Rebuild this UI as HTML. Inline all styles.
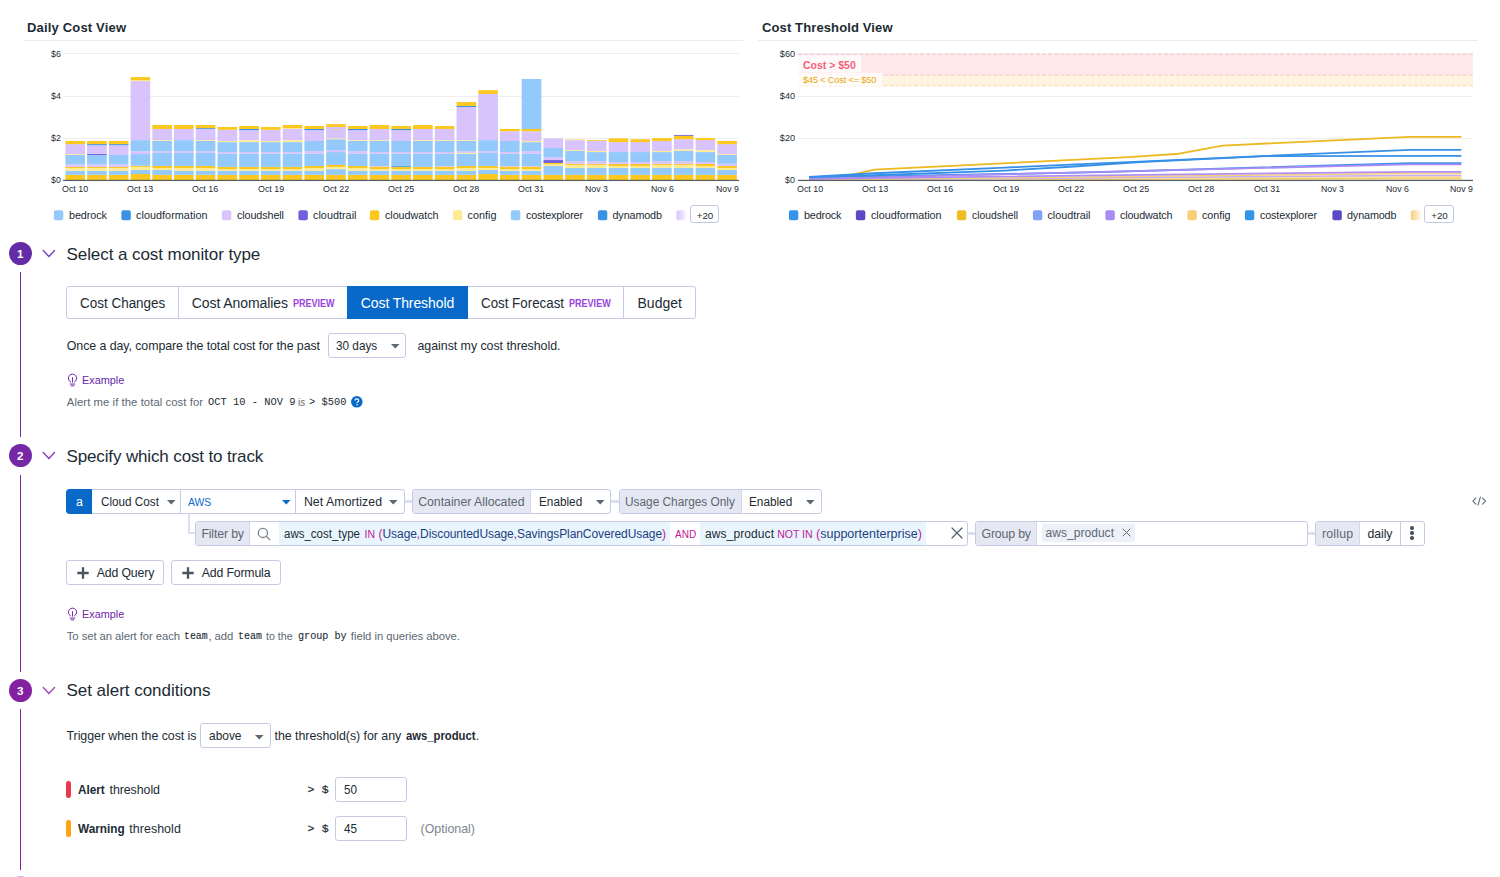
<!DOCTYPE html>
<html lang="en"><head><meta charset="utf-8"><title>Cost Monitor</title>
<style>
html,body{margin:0;padding:0;background:#fff;overflow:hidden}
body{width:1500px;height:877px;position:relative;overflow:hidden;font-family:"Liberation Sans",sans-serif;color:#1c2b34}
.t{position:absolute;white-space:pre;line-height:20px;height:20px;transform-origin:0 50%}
svg{display:block;overflow:visible}
</style></head><body>
<svg style="position:absolute;left:0;top:0" width="1500" height="232" viewBox="0 0 1500 232" shape-rendering="auto">
<rect x="63" y="53.0" width="676" height="1" fill="#eeeef1"/>
<rect x="798" y="53.0" width="675" height="1" fill="#eeeef1"/>
<rect x="63" y="96.0" width="676" height="1" fill="#eeeef1"/>
<rect x="798" y="96.0" width="675" height="1" fill="#eeeef1"/>
<rect x="63" y="138.0" width="676" height="1" fill="#eeeef1"/>
<rect x="798" y="138.0" width="675" height="1" fill="#eeeef1"/>
<rect x="65.40" y="174.88" width="19.6" height="5.56" fill="#fdc81e"/>
<rect x="65.40" y="170.89" width="19.6" height="3.99" fill="#93c9fb"/>
<rect x="65.40" y="168.04" width="19.6" height="2.85" fill="#fdeb96"/>
<rect x="65.40" y="166.90" width="19.6" height="1.14" fill="#fdc81e"/>
<rect x="65.40" y="164.33" width="19.6" height="2.57" fill="#d8c3fc"/>
<rect x="65.40" y="154.93" width="19.6" height="9.41" fill="#93c9fb"/>
<rect x="65.40" y="154.07" width="19.6" height="0.86" fill="#fdeb96"/>
<rect x="65.40" y="144.09" width="19.6" height="9.98" fill="#d8c3fc"/>
<rect x="65.40" y="140.96" width="19.6" height="3.14" fill="#fdc81e"/>
<rect x="87.13" y="174.88" width="19.6" height="5.56" fill="#fdc81e"/>
<rect x="87.13" y="170.89" width="19.6" height="3.99" fill="#93c9fb"/>
<rect x="87.13" y="168.04" width="19.6" height="2.85" fill="#fdeb96"/>
<rect x="87.13" y="166.90" width="19.6" height="1.14" fill="#fdc81e"/>
<rect x="87.13" y="164.33" width="19.6" height="2.57" fill="#d8c3fc"/>
<rect x="87.13" y="154.93" width="19.6" height="9.41" fill="#93c9fb"/>
<rect x="87.13" y="153.93" width="19.6" height="1.00" fill="#6f5fdc"/>
<rect x="87.13" y="145.23" width="19.6" height="8.69" fill="#d8c3fc"/>
<rect x="87.13" y="144.09" width="19.6" height="1.14" fill="#3a92e6"/>
<rect x="87.13" y="140.96" width="19.6" height="3.14" fill="#fdc81e"/>
<rect x="108.86" y="174.88" width="19.6" height="5.56" fill="#fdc81e"/>
<rect x="108.86" y="170.89" width="19.6" height="3.99" fill="#93c9fb"/>
<rect x="108.86" y="168.04" width="19.6" height="2.85" fill="#fdeb96"/>
<rect x="108.86" y="166.90" width="19.6" height="1.14" fill="#fdc81e"/>
<rect x="108.86" y="164.33" width="19.6" height="2.57" fill="#d8c3fc"/>
<rect x="108.86" y="154.93" width="19.6" height="9.41" fill="#93c9fb"/>
<rect x="108.86" y="145.23" width="19.6" height="9.69" fill="#d8c3fc"/>
<rect x="108.86" y="144.09" width="19.6" height="1.14" fill="#3a92e6"/>
<rect x="108.86" y="140.96" width="19.6" height="3.14" fill="#fdc81e"/>
<rect x="130.59" y="174.03" width="19.6" height="6.41" fill="#fdc81e"/>
<rect x="130.59" y="170.03" width="19.6" height="3.99" fill="#93c9fb"/>
<rect x="130.59" y="166.90" width="19.6" height="3.14" fill="#fdeb96"/>
<rect x="130.59" y="165.76" width="19.6" height="1.14" fill="#fdc81e"/>
<rect x="130.59" y="154.07" width="19.6" height="11.69" fill="#93c9fb"/>
<rect x="130.59" y="151.22" width="19.6" height="2.85" fill="#d8c3fc"/>
<rect x="130.59" y="140.10" width="19.6" height="11.12" fill="#93c9fb"/>
<rect x="130.59" y="81.09" width="19.6" height="59.01" fill="#d8c3fc"/>
<rect x="130.59" y="80.24" width="19.6" height="0.86" fill="#fdeb96"/>
<rect x="130.59" y="77.10" width="19.6" height="3.14" fill="#fdc81e"/>
<rect x="152.32" y="174.88" width="19.6" height="5.56" fill="#fdc81e"/>
<rect x="152.32" y="170.03" width="19.6" height="4.85" fill="#93c9fb"/>
<rect x="152.32" y="168.04" width="19.6" height="2.00" fill="#fdeb96"/>
<rect x="152.32" y="166.04" width="19.6" height="2.00" fill="#fdc81e"/>
<rect x="152.32" y="152.93" width="19.6" height="13.11" fill="#93c9fb"/>
<rect x="152.32" y="151.22" width="19.6" height="1.71" fill="#d8c3fc"/>
<rect x="152.32" y="140.96" width="19.6" height="10.26" fill="#93c9fb"/>
<rect x="152.32" y="140.10" width="19.6" height="0.86" fill="#fdeb96"/>
<rect x="152.32" y="128.99" width="19.6" height="11.12" fill="#d8c3fc"/>
<rect x="152.32" y="124.99" width="19.6" height="3.99" fill="#fdc81e"/>
<rect x="174.05" y="174.88" width="19.6" height="5.56" fill="#fdc81e"/>
<rect x="174.05" y="170.89" width="19.6" height="3.99" fill="#93c9fb"/>
<rect x="174.05" y="168.04" width="19.6" height="2.85" fill="#fdeb96"/>
<rect x="174.05" y="166.04" width="19.6" height="2.00" fill="#fdc81e"/>
<rect x="174.05" y="152.93" width="19.6" height="13.11" fill="#93c9fb"/>
<rect x="174.05" y="151.22" width="19.6" height="1.71" fill="#d8c3fc"/>
<rect x="174.05" y="140.10" width="19.6" height="11.12" fill="#93c9fb"/>
<rect x="174.05" y="128.99" width="19.6" height="11.12" fill="#d8c3fc"/>
<rect x="174.05" y="124.99" width="19.6" height="3.99" fill="#fdc81e"/>
<rect x="195.78" y="174.88" width="19.6" height="5.56" fill="#fdc81e"/>
<rect x="195.78" y="170.89" width="19.6" height="3.99" fill="#93c9fb"/>
<rect x="195.78" y="168.04" width="19.6" height="2.85" fill="#fdeb96"/>
<rect x="195.78" y="166.04" width="19.6" height="2.00" fill="#fdc81e"/>
<rect x="195.78" y="152.93" width="19.6" height="13.11" fill="#93c9fb"/>
<rect x="195.78" y="151.22" width="19.6" height="1.71" fill="#d8c3fc"/>
<rect x="195.78" y="140.96" width="19.6" height="10.26" fill="#93c9fb"/>
<rect x="195.78" y="140.10" width="19.6" height="0.86" fill="#fdeb96"/>
<rect x="195.78" y="128.99" width="19.6" height="11.12" fill="#d8c3fc"/>
<rect x="195.78" y="128.13" width="19.6" height="0.86" fill="#3a92e6"/>
<rect x="195.78" y="124.99" width="19.6" height="3.14" fill="#fdc81e"/>
<rect x="217.51" y="174.88" width="19.6" height="5.56" fill="#fdc81e"/>
<rect x="217.51" y="170.89" width="19.6" height="3.99" fill="#93c9fb"/>
<rect x="217.51" y="169.18" width="19.6" height="1.71" fill="#fdeb96"/>
<rect x="217.51" y="166.90" width="19.6" height="2.28" fill="#fdc81e"/>
<rect x="217.51" y="153.79" width="19.6" height="13.11" fill="#93c9fb"/>
<rect x="217.51" y="152.08" width="19.6" height="1.71" fill="#d8c3fc"/>
<rect x="217.51" y="142.10" width="19.6" height="9.98" fill="#93c9fb"/>
<rect x="217.51" y="140.96" width="19.6" height="1.14" fill="#fdeb96"/>
<rect x="217.51" y="129.84" width="19.6" height="11.12" fill="#d8c3fc"/>
<rect x="217.51" y="126.99" width="19.6" height="2.85" fill="#fdc81e"/>
<rect x="239.24" y="174.88" width="19.6" height="5.56" fill="#fdc81e"/>
<rect x="239.24" y="170.89" width="19.6" height="3.99" fill="#93c9fb"/>
<rect x="239.24" y="169.18" width="19.6" height="1.71" fill="#fdeb96"/>
<rect x="239.24" y="166.90" width="19.6" height="2.28" fill="#fdc81e"/>
<rect x="239.24" y="153.79" width="19.6" height="13.11" fill="#93c9fb"/>
<rect x="239.24" y="152.08" width="19.6" height="1.71" fill="#d8c3fc"/>
<rect x="239.24" y="142.10" width="19.6" height="9.98" fill="#93c9fb"/>
<rect x="239.24" y="140.10" width="19.6" height="2.00" fill="#fdeb96"/>
<rect x="239.24" y="130.13" width="19.6" height="9.98" fill="#d8c3fc"/>
<rect x="239.24" y="128.99" width="19.6" height="1.14" fill="#3a92e6"/>
<rect x="239.24" y="125.99" width="19.6" height="2.99" fill="#fdc81e"/>
<rect x="260.97" y="174.88" width="19.6" height="5.56" fill="#fdc81e"/>
<rect x="260.97" y="170.89" width="19.6" height="3.99" fill="#93c9fb"/>
<rect x="260.97" y="169.18" width="19.6" height="1.71" fill="#fdeb96"/>
<rect x="260.97" y="166.90" width="19.6" height="2.28" fill="#fdc81e"/>
<rect x="260.97" y="153.79" width="19.6" height="13.11" fill="#93c9fb"/>
<rect x="260.97" y="152.08" width="19.6" height="1.71" fill="#d8c3fc"/>
<rect x="260.97" y="142.10" width="19.6" height="9.98" fill="#93c9fb"/>
<rect x="260.97" y="140.96" width="19.6" height="1.14" fill="#fdeb96"/>
<rect x="260.97" y="129.84" width="19.6" height="11.12" fill="#d8c3fc"/>
<rect x="260.97" y="126.99" width="19.6" height="2.85" fill="#fdc81e"/>
<rect x="282.70" y="174.88" width="19.6" height="5.56" fill="#fdc81e"/>
<rect x="282.70" y="170.89" width="19.6" height="3.99" fill="#93c9fb"/>
<rect x="282.70" y="169.18" width="19.6" height="1.71" fill="#fdeb96"/>
<rect x="282.70" y="166.90" width="19.6" height="2.28" fill="#fdc81e"/>
<rect x="282.70" y="153.79" width="19.6" height="13.11" fill="#93c9fb"/>
<rect x="282.70" y="152.08" width="19.6" height="1.71" fill="#d8c3fc"/>
<rect x="282.70" y="142.10" width="19.6" height="9.98" fill="#93c9fb"/>
<rect x="282.70" y="140.10" width="19.6" height="2.00" fill="#fdeb96"/>
<rect x="282.70" y="128.99" width="19.6" height="11.12" fill="#d8c3fc"/>
<rect x="282.70" y="128.13" width="19.6" height="0.86" fill="#fdeb96"/>
<rect x="282.70" y="124.99" width="19.6" height="3.14" fill="#fdc81e"/>
<rect x="304.43" y="174.88" width="19.6" height="5.56" fill="#fdc81e"/>
<rect x="304.43" y="170.89" width="19.6" height="3.99" fill="#93c9fb"/>
<rect x="304.43" y="168.04" width="19.6" height="2.85" fill="#fdeb96"/>
<rect x="304.43" y="166.04" width="19.6" height="2.00" fill="#fdc81e"/>
<rect x="304.43" y="153.79" width="19.6" height="12.26" fill="#93c9fb"/>
<rect x="304.43" y="151.22" width="19.6" height="2.57" fill="#d8c3fc"/>
<rect x="304.43" y="140.96" width="19.6" height="10.26" fill="#93c9fb"/>
<rect x="304.43" y="130.13" width="19.6" height="10.83" fill="#d8c3fc"/>
<rect x="304.43" y="128.99" width="19.6" height="1.14" fill="#3a92e6"/>
<rect x="304.43" y="125.99" width="19.6" height="2.99" fill="#fdc81e"/>
<rect x="326.16" y="174.88" width="19.6" height="5.56" fill="#fdc81e"/>
<rect x="326.16" y="169.18" width="19.6" height="5.70" fill="#93c9fb"/>
<rect x="326.16" y="166.90" width="19.6" height="2.28" fill="#fdeb96"/>
<rect x="326.16" y="164.90" width="19.6" height="2.00" fill="#fdc81e"/>
<rect x="326.16" y="152.08" width="19.6" height="12.83" fill="#93c9fb"/>
<rect x="326.16" y="150.08" width="19.6" height="2.00" fill="#d8c3fc"/>
<rect x="326.16" y="139.25" width="19.6" height="10.83" fill="#93c9fb"/>
<rect x="326.16" y="138.39" width="19.6" height="0.86" fill="#fdeb96"/>
<rect x="326.16" y="126.99" width="19.6" height="11.40" fill="#d8c3fc"/>
<rect x="326.16" y="124.14" width="19.6" height="2.85" fill="#fdc81e"/>
<rect x="347.89" y="174.88" width="19.6" height="5.56" fill="#fdc81e"/>
<rect x="347.89" y="170.89" width="19.6" height="3.99" fill="#93c9fb"/>
<rect x="347.89" y="168.04" width="19.6" height="2.85" fill="#fdeb96"/>
<rect x="347.89" y="166.04" width="19.6" height="2.00" fill="#fdc81e"/>
<rect x="347.89" y="153.79" width="19.6" height="12.26" fill="#93c9fb"/>
<rect x="347.89" y="151.22" width="19.6" height="2.57" fill="#d8c3fc"/>
<rect x="347.89" y="140.96" width="19.6" height="10.26" fill="#93c9fb"/>
<rect x="347.89" y="140.10" width="19.6" height="0.86" fill="#fdeb96"/>
<rect x="347.89" y="130.13" width="19.6" height="9.98" fill="#d8c3fc"/>
<rect x="347.89" y="128.99" width="19.6" height="1.14" fill="#3a92e6"/>
<rect x="347.89" y="125.99" width="19.6" height="2.99" fill="#fdc81e"/>
<rect x="369.62" y="174.88" width="19.6" height="5.56" fill="#fdc81e"/>
<rect x="369.62" y="170.89" width="19.6" height="3.99" fill="#93c9fb"/>
<rect x="369.62" y="169.18" width="19.6" height="1.71" fill="#fdeb96"/>
<rect x="369.62" y="166.90" width="19.6" height="2.28" fill="#fdc81e"/>
<rect x="369.62" y="166.04" width="19.6" height="0.86" fill="#f6c3c6"/>
<rect x="369.62" y="153.79" width="19.6" height="12.26" fill="#93c9fb"/>
<rect x="369.62" y="152.08" width="19.6" height="1.71" fill="#d8c3fc"/>
<rect x="369.62" y="140.96" width="19.6" height="11.12" fill="#93c9fb"/>
<rect x="369.62" y="140.10" width="19.6" height="0.86" fill="#fdeb96"/>
<rect x="369.62" y="128.99" width="19.6" height="11.12" fill="#d8c3fc"/>
<rect x="369.62" y="124.99" width="19.6" height="3.99" fill="#fdc81e"/>
<rect x="391.35" y="174.88" width="19.6" height="5.56" fill="#fdc81e"/>
<rect x="391.35" y="170.89" width="19.6" height="3.99" fill="#93c9fb"/>
<rect x="391.35" y="169.18" width="19.6" height="1.71" fill="#fdeb96"/>
<rect x="391.35" y="166.90" width="19.6" height="2.28" fill="#fdc81e"/>
<rect x="391.35" y="166.04" width="19.6" height="0.86" fill="#3a92e6"/>
<rect x="391.35" y="153.79" width="19.6" height="12.26" fill="#93c9fb"/>
<rect x="391.35" y="152.08" width="19.6" height="1.71" fill="#d8c3fc"/>
<rect x="391.35" y="140.96" width="19.6" height="11.12" fill="#93c9fb"/>
<rect x="391.35" y="130.13" width="19.6" height="10.83" fill="#d8c3fc"/>
<rect x="391.35" y="128.99" width="19.6" height="1.14" fill="#3a92e6"/>
<rect x="391.35" y="125.99" width="19.6" height="2.99" fill="#fdc81e"/>
<rect x="413.08" y="174.88" width="19.6" height="5.56" fill="#fdc81e"/>
<rect x="413.08" y="170.89" width="19.6" height="3.99" fill="#93c9fb"/>
<rect x="413.08" y="169.18" width="19.6" height="1.71" fill="#fdeb96"/>
<rect x="413.08" y="166.90" width="19.6" height="2.28" fill="#fdc81e"/>
<rect x="413.08" y="153.79" width="19.6" height="13.11" fill="#93c9fb"/>
<rect x="413.08" y="152.08" width="19.6" height="1.71" fill="#d8c3fc"/>
<rect x="413.08" y="140.96" width="19.6" height="11.12" fill="#93c9fb"/>
<rect x="413.08" y="140.10" width="19.6" height="0.86" fill="#fdeb96"/>
<rect x="413.08" y="128.99" width="19.6" height="11.12" fill="#d8c3fc"/>
<rect x="413.08" y="124.99" width="19.6" height="3.99" fill="#fdc81e"/>
<rect x="434.81" y="174.88" width="19.6" height="5.56" fill="#fdc81e"/>
<rect x="434.81" y="170.89" width="19.6" height="3.99" fill="#93c9fb"/>
<rect x="434.81" y="169.18" width="19.6" height="1.71" fill="#fdeb96"/>
<rect x="434.81" y="166.90" width="19.6" height="2.28" fill="#fdc81e"/>
<rect x="434.81" y="166.19" width="19.6" height="0.71" fill="#f6c3c6"/>
<rect x="434.81" y="153.79" width="19.6" height="12.40" fill="#93c9fb"/>
<rect x="434.81" y="152.08" width="19.6" height="1.71" fill="#d8c3fc"/>
<rect x="434.81" y="140.96" width="19.6" height="11.12" fill="#93c9fb"/>
<rect x="434.81" y="140.10" width="19.6" height="0.86" fill="#fdeb96"/>
<rect x="434.81" y="128.99" width="19.6" height="11.12" fill="#d8c3fc"/>
<rect x="434.81" y="125.99" width="19.6" height="2.99" fill="#fdc81e"/>
<rect x="456.54" y="174.88" width="19.6" height="5.56" fill="#fdc81e"/>
<rect x="456.54" y="170.89" width="19.6" height="3.99" fill="#93c9fb"/>
<rect x="456.54" y="168.04" width="19.6" height="2.85" fill="#fdeb96"/>
<rect x="456.54" y="166.04" width="19.6" height="2.00" fill="#fdc81e"/>
<rect x="456.54" y="153.79" width="19.6" height="12.26" fill="#93c9fb"/>
<rect x="456.54" y="152.93" width="19.6" height="0.86" fill="#fdeb96"/>
<rect x="456.54" y="151.22" width="19.6" height="1.71" fill="#d8c3fc"/>
<rect x="456.54" y="140.96" width="19.6" height="10.26" fill="#93c9fb"/>
<rect x="456.54" y="140.10" width="19.6" height="0.86" fill="#fdeb96"/>
<rect x="456.54" y="107.04" width="19.6" height="33.07" fill="#d8c3fc"/>
<rect x="456.54" y="105.90" width="19.6" height="1.14" fill="#3a92e6"/>
<rect x="456.54" y="102.05" width="19.6" height="3.85" fill="#fdc81e"/>
<rect x="478.27" y="174.03" width="19.6" height="6.41" fill="#fdc81e"/>
<rect x="478.27" y="170.03" width="19.6" height="3.99" fill="#93c9fb"/>
<rect x="478.27" y="168.04" width="19.6" height="2.00" fill="#fdeb96"/>
<rect x="478.27" y="166.04" width="19.6" height="2.00" fill="#fdc81e"/>
<rect x="478.27" y="152.93" width="19.6" height="13.11" fill="#93c9fb"/>
<rect x="478.27" y="151.22" width="19.6" height="1.71" fill="#d8c3fc"/>
<rect x="478.27" y="140.10" width="19.6" height="11.12" fill="#93c9fb"/>
<rect x="478.27" y="93.92" width="19.6" height="46.18" fill="#d8c3fc"/>
<rect x="478.27" y="90.22" width="19.6" height="3.71" fill="#fdc81e"/>
<rect x="500.00" y="174.88" width="19.6" height="5.56" fill="#fdc81e"/>
<rect x="500.00" y="170.89" width="19.6" height="3.99" fill="#93c9fb"/>
<rect x="500.00" y="169.18" width="19.6" height="1.71" fill="#fdeb96"/>
<rect x="500.00" y="166.90" width="19.6" height="2.28" fill="#fdc81e"/>
<rect x="500.00" y="166.19" width="19.6" height="0.71" fill="#f6c3c6"/>
<rect x="500.00" y="153.79" width="19.6" height="12.40" fill="#93c9fb"/>
<rect x="500.00" y="152.08" width="19.6" height="1.71" fill="#d8c3fc"/>
<rect x="500.00" y="140.96" width="19.6" height="11.12" fill="#93c9fb"/>
<rect x="500.00" y="131.27" width="19.6" height="9.69" fill="#d8c3fc"/>
<rect x="500.00" y="128.99" width="19.6" height="2.28" fill="#fdc81e"/>
<rect x="521.73" y="174.88" width="19.6" height="5.56" fill="#fdc81e"/>
<rect x="521.73" y="170.89" width="19.6" height="3.99" fill="#93c9fb"/>
<rect x="521.73" y="169.18" width="19.6" height="1.71" fill="#fdeb96"/>
<rect x="521.73" y="166.90" width="19.6" height="2.28" fill="#fdc81e"/>
<rect x="521.73" y="166.19" width="19.6" height="0.71" fill="#f6c3c6"/>
<rect x="521.73" y="153.79" width="19.6" height="12.40" fill="#93c9fb"/>
<rect x="521.73" y="151.22" width="19.6" height="2.57" fill="#d8c3fc"/>
<rect x="521.73" y="142.10" width="19.6" height="9.12" fill="#93c9fb"/>
<rect x="521.73" y="140.96" width="19.6" height="1.14" fill="#fdeb96"/>
<rect x="521.73" y="131.27" width="19.6" height="9.69" fill="#d8c3fc"/>
<rect x="521.73" y="128.99" width="19.6" height="2.28" fill="#fdc81e"/>
<rect x="521.73" y="78.96" width="19.6" height="50.03" fill="#93c9fb"/>
<rect x="543.46" y="174.88" width="19.6" height="5.56" fill="#fdc81e"/>
<rect x="543.46" y="166.04" width="19.6" height="8.84" fill="#93c9fb"/>
<rect x="543.46" y="164.05" width="19.6" height="2.00" fill="#fdeb96"/>
<rect x="543.46" y="162.91" width="19.6" height="1.14" fill="#fdc81e"/>
<rect x="543.46" y="160.06" width="19.6" height="2.85" fill="#6f5fdc"/>
<rect x="543.46" y="157.21" width="19.6" height="2.85" fill="#d8c3fc"/>
<rect x="543.46" y="148.08" width="19.6" height="9.12" fill="#93c9fb"/>
<rect x="543.46" y="138.39" width="19.6" height="9.69" fill="#d8c3fc"/>
<rect x="565.19" y="174.88" width="19.6" height="5.56" fill="#fdc81e"/>
<rect x="565.19" y="168.04" width="19.6" height="6.84" fill="#93c9fb"/>
<rect x="565.19" y="164.90" width="19.6" height="3.14" fill="#fdeb96"/>
<rect x="565.19" y="163.76" width="19.6" height="1.14" fill="#fdc81e"/>
<rect x="565.19" y="161.20" width="19.6" height="2.57" fill="#d8c3fc"/>
<rect x="565.19" y="150.94" width="19.6" height="10.26" fill="#93c9fb"/>
<rect x="565.19" y="150.08" width="19.6" height="0.86" fill="#fdeb96"/>
<rect x="565.19" y="140.10" width="19.6" height="9.98" fill="#d8c3fc"/>
<rect x="565.19" y="139.25" width="19.6" height="0.86" fill="#fdeb96"/>
<rect x="586.92" y="174.88" width="19.6" height="5.56" fill="#fdc81e"/>
<rect x="586.92" y="168.04" width="19.6" height="6.84" fill="#93c9fb"/>
<rect x="586.92" y="164.90" width="19.6" height="3.14" fill="#fdeb96"/>
<rect x="586.92" y="163.76" width="19.6" height="1.14" fill="#fdc81e"/>
<rect x="586.92" y="161.20" width="19.6" height="2.57" fill="#d8c3fc"/>
<rect x="586.92" y="152.08" width="19.6" height="9.12" fill="#93c9fb"/>
<rect x="586.92" y="150.94" width="19.6" height="1.14" fill="#fdeb96"/>
<rect x="586.92" y="140.96" width="19.6" height="9.98" fill="#d8c3fc"/>
<rect x="586.92" y="140.10" width="19.6" height="0.86" fill="#fdc81e"/>
<rect x="608.65" y="174.88" width="19.6" height="5.56" fill="#fdc81e"/>
<rect x="608.65" y="168.04" width="19.6" height="6.84" fill="#93c9fb"/>
<rect x="608.65" y="166.04" width="19.6" height="2.00" fill="#fdeb96"/>
<rect x="608.65" y="164.05" width="19.6" height="2.00" fill="#fdc81e"/>
<rect x="608.65" y="162.05" width="19.6" height="2.00" fill="#d8c3fc"/>
<rect x="608.65" y="152.08" width="19.6" height="9.98" fill="#93c9fb"/>
<rect x="608.65" y="142.10" width="19.6" height="9.98" fill="#d8c3fc"/>
<rect x="608.65" y="138.39" width="19.6" height="3.71" fill="#fdc81e"/>
<rect x="630.38" y="174.88" width="19.6" height="5.56" fill="#fdc81e"/>
<rect x="630.38" y="168.04" width="19.6" height="6.84" fill="#93c9fb"/>
<rect x="630.38" y="166.04" width="19.6" height="2.00" fill="#fdeb96"/>
<rect x="630.38" y="164.05" width="19.6" height="2.00" fill="#fdc81e"/>
<rect x="630.38" y="162.05" width="19.6" height="2.00" fill="#d8c3fc"/>
<rect x="630.38" y="152.08" width="19.6" height="9.98" fill="#93c9fb"/>
<rect x="630.38" y="142.10" width="19.6" height="9.98" fill="#d8c3fc"/>
<rect x="630.38" y="139.25" width="19.6" height="2.85" fill="#fdc81e"/>
<rect x="652.11" y="174.88" width="19.6" height="5.56" fill="#fdc81e"/>
<rect x="652.11" y="168.04" width="19.6" height="6.84" fill="#93c9fb"/>
<rect x="652.11" y="164.90" width="19.6" height="3.14" fill="#fdeb96"/>
<rect x="652.11" y="163.76" width="19.6" height="1.14" fill="#fdc81e"/>
<rect x="652.11" y="161.20" width="19.6" height="2.57" fill="#d8c3fc"/>
<rect x="652.11" y="152.08" width="19.6" height="9.12" fill="#93c9fb"/>
<rect x="652.11" y="150.94" width="19.6" height="1.14" fill="#fdeb96"/>
<rect x="652.11" y="140.96" width="19.6" height="9.98" fill="#d8c3fc"/>
<rect x="652.11" y="138.11" width="19.6" height="2.85" fill="#fdc81e"/>
<rect x="673.84" y="174.88" width="19.6" height="5.56" fill="#fdc81e"/>
<rect x="673.84" y="168.04" width="19.6" height="6.84" fill="#93c9fb"/>
<rect x="673.84" y="164.90" width="19.6" height="3.14" fill="#fdeb96"/>
<rect x="673.84" y="163.76" width="19.6" height="1.14" fill="#fdc81e"/>
<rect x="673.84" y="161.20" width="19.6" height="2.57" fill="#d8c3fc"/>
<rect x="673.84" y="150.94" width="19.6" height="10.26" fill="#93c9fb"/>
<rect x="673.84" y="149.22" width="19.6" height="1.71" fill="#fdeb96"/>
<rect x="673.84" y="139.25" width="19.6" height="9.98" fill="#d8c3fc"/>
<rect x="673.84" y="135.83" width="19.6" height="3.42" fill="#fdc81e"/>
<rect x="673.84" y="134.97" width="19.6" height="0.86" fill="#6f5fdc"/>
<rect x="695.57" y="174.88" width="19.6" height="5.56" fill="#fdc81e"/>
<rect x="695.57" y="168.04" width="19.6" height="6.84" fill="#93c9fb"/>
<rect x="695.57" y="166.04" width="19.6" height="2.00" fill="#fdeb96"/>
<rect x="695.57" y="164.05" width="19.6" height="2.00" fill="#fdc81e"/>
<rect x="695.57" y="162.05" width="19.6" height="2.00" fill="#d8c3fc"/>
<rect x="695.57" y="152.08" width="19.6" height="9.98" fill="#93c9fb"/>
<rect x="695.57" y="150.08" width="19.6" height="2.00" fill="#fdeb96"/>
<rect x="695.57" y="140.10" width="19.6" height="9.98" fill="#d8c3fc"/>
<rect x="695.57" y="138.11" width="19.6" height="2.00" fill="#fdc81e"/>
<rect x="717.30" y="174.88" width="19.6" height="5.56" fill="#fdc81e"/>
<rect x="717.30" y="170.03" width="19.6" height="4.85" fill="#93c9fb"/>
<rect x="717.30" y="168.04" width="19.6" height="2.00" fill="#fdeb96"/>
<rect x="717.30" y="166.04" width="19.6" height="2.00" fill="#fdc81e"/>
<rect x="717.30" y="163.76" width="19.6" height="2.28" fill="#d8c3fc"/>
<rect x="717.30" y="154.93" width="19.6" height="8.84" fill="#93c9fb"/>
<rect x="717.30" y="154.07" width="19.6" height="0.86" fill="#fdeb96"/>
<rect x="717.30" y="144.09" width="19.6" height="9.98" fill="#d8c3fc"/>
<rect x="717.30" y="140.96" width="19.6" height="3.14" fill="#fdc81e"/>
<rect x="63" y="179.8" width="676" height="1.25" fill="#555c64"/>
<rect x="798" y="54.4" width="675" height="20.6" fill="#ffe9eb"/>
<rect x="798" y="75" width="675" height="10.8" fill="#fff4e0"/>
<path d="M798 54.4H1473" stroke="#f9bcc2" stroke-width="0.9" stroke-dasharray="4.1 2" fill="none"/>
<path d="M798 75H1473" stroke="#f9bcc2" stroke-width="0.9" stroke-dasharray="4.1 2" fill="none"/>
<path d="M798 85.8H1473" stroke="#fcd09c" stroke-width="0.9" stroke-dasharray="4.1 2" fill="none"/>
<rect x="798" y="55.2" width="63" height="17" fill="#fff" fill-opacity="0.75"/>
<rect x="798" y="72.8" width="84" height="13.4" fill="#fff" fill-opacity="0.8"/>
<path d="M809.0 179.98 L1409.9 179.14 L1461.4 179.14" fill="none" stroke="#fbe7ad" stroke-width="1.2" stroke-linejoin="round" stroke-linecap="butt"/>
<path d="M809.0 180.19 L1409.9 178.09 L1461.4 178.09" fill="none" stroke="#f6c85a" stroke-width="1.5" stroke-linejoin="round" stroke-linecap="butt"/>
<path d="M809.0 180.19 L1409.9 176.83 L1461.4 176.83" fill="none" stroke="#fde39a" stroke-width="1.5" stroke-linejoin="round" stroke-linecap="butt"/>
<path d="M809.0 180.09 L1409.9 175.57 L1461.4 175.57" fill="none" stroke="#c3aefa" stroke-width="1.5" stroke-linejoin="round" stroke-linecap="butt"/>
<path d="M809.0 179.98 L1409.9 173.47 L1461.4 173.47" fill="none" stroke="#f8cf77" stroke-width="1.6" stroke-linejoin="round" stroke-linecap="butt"/>
<path d="M809.0 178.93 L1409.9 171.79 L1461.4 171.79" fill="none" stroke="#b08ff5" stroke-width="1.7" stroke-linejoin="round" stroke-linecap="butt"/>
<path d="M809.0 177.88 L852.5 174.73 L874.3 169.69 L1129.0 157.09 L1179.1 153.73 L1222.6 145.54 L1409.9 136.93 L1461.4 136.93" fill="none" stroke="#ebb920" stroke-width="1.8" stroke-linejoin="round" stroke-linecap="butt"/>
<path d="M809.0 177.25 L874.3 176.41 L1100.7 172.21 L1244.4 168.01 L1409.9 163.18 L1461.4 163.18" fill="none" stroke="#3790e8" stroke-width="1.8" stroke-linejoin="round" stroke-linecap="butt"/>
<path d="M809.0 178.72 L874.3 177.46 L1100.7 171.79 L1244.4 168.33 L1409.9 164.44 L1461.4 164.44" fill="none" stroke="#a98bf5" stroke-width="1.8" stroke-linejoin="round" stroke-linecap="butt"/>
<path d="M809.0 177.04 L874.3 175.25 L1004.9 170.53 L1070.2 166.75 L1139.9 162.13 L1266.2 156.04 L1461.4 155.83" fill="none" stroke="#3790e8" stroke-width="1.8" stroke-linejoin="round" stroke-linecap="butt"/>
<path d="M809.0 176.94 L874.3 173.26 L1004.9 167.59 L1070.2 164.65 L1139.9 161.71 L1266.2 155.83 L1409.9 149.95 L1461.4 149.95" fill="none" stroke="#3790e8" stroke-width="1.8" stroke-linejoin="round" stroke-linecap="butt"/>
<rect x="798" y="179.8" width="675" height="1.25" fill="#555c64"/>
<rect x="53.9" y="210.2" width="9.4" height="10" rx="2" fill="#93c9fb"/>
<rect x="121.4" y="210.2" width="9.4" height="10" rx="2" fill="#3a92e6"/>
<rect x="221.9" y="210.2" width="9.4" height="10" rx="2" fill="#d8c3fc"/>
<rect x="298.4" y="210.2" width="9.4" height="10" rx="2" fill="#6f5fdc"/>
<rect x="369.9" y="210.2" width="9.4" height="10" rx="2" fill="#fdc81e"/>
<rect x="452.9" y="210.2" width="9.4" height="10" rx="2" fill="#fdeb96"/>
<rect x="510.9" y="210.2" width="9.4" height="10" rx="2" fill="#93c9fb"/>
<rect x="597.9" y="210.2" width="9.4" height="10" rx="2" fill="#3a92e6"/>
<defs><linearGradient id="f1" x1="0" x2="1"><stop offset="0" stop-color="#d8c3fc"/><stop offset="1" stop-color="#d8c3fc" stop-opacity="0.15"/></linearGradient><linearGradient id="f2" x1="0" x2="1"><stop offset="0" stop-color="#f8cf77"/><stop offset="1" stop-color="#f8cf77" stop-opacity="0.15"/></linearGradient></defs>
<rect x="676.4" y="210.2" width="10" height="10" rx="2" fill="url(#f1)"/>
<rect x="788.9" y="210.2" width="9.4" height="10" rx="2" fill="#3394ea"/>
<rect x="855.9" y="210.2" width="9.4" height="10" rx="2" fill="#5a4bc4"/>
<rect x="956.9" y="210.2" width="9.4" height="10" rx="2" fill="#eebd25"/>
<rect x="1032.9" y="210.2" width="9.4" height="10" rx="2" fill="#7fa4f5"/>
<rect x="1105.4" y="210.2" width="9.4" height="10" rx="2" fill="#a98bf5"/>
<rect x="1187.4" y="210.2" width="9.4" height="10" rx="2" fill="#f8cf77"/>
<rect x="1244.9" y="210.2" width="9.4" height="10" rx="2" fill="#3394ea"/>
<rect x="1332.4" y="210.2" width="9.4" height="10" rx="2" fill="#5a4bc4"/>
<rect x="1410.9" y="210.2" width="10" height="10" rx="2" fill="url(#f2)"/>
</svg>
<div style="position:absolute;left:690px;top:205px;width:29px;height:18px;box-sizing:border-box;background:#fff;border:1px solid #c3c8e6;border-radius:3px;"></div>
<div style="position:absolute;left:1424px;top:205px;width:30px;height:18px;box-sizing:border-box;background:#fff;border:1px solid #c3c8e6;border-radius:3px;"></div>
<div style="position:absolute;left:23px;top:39.6px;width:720px;height:1px;background:#eaebf3"></div>
<div style="position:absolute;left:757.6px;top:39.6px;width:720px;height:1px;background:#eaebf3"></div>
<div style="position:absolute;left:8.9px;top:241.9px;width:23.2px;height:23.2px;border-radius:50%;background:#632ca6"></div>
<svg style="position:absolute;left:42.3px;top:249.1px" width="14" height="10" viewBox="0 0 14 10"><path d="M1.3 1.6L6.9 7.6L12.5 1.6" fill="none" stroke="#7d4cc0" stroke-width="1.5" stroke-linecap="round" stroke-linejoin="round"/></svg>
<div style="position:absolute;left:19.8px;top:272.3px;width:1.5px;height:164.59999999999997px;background:linear-gradient(#632ca6,#7428a6)"></div>
<div style="position:absolute;left:8.9px;top:444.09999999999997px;width:23.2px;height:23.2px;border-radius:50%;background:#7428a6"></div>
<svg style="position:absolute;left:42.3px;top:451.3px" width="14" height="10" viewBox="0 0 14 10"><path d="M1.3 1.6L6.9 7.6L12.5 1.6" fill="none" stroke="#8c46be" stroke-width="1.5" stroke-linecap="round" stroke-linejoin="round"/></svg>
<div style="position:absolute;left:19.8px;top:474.6px;width:1.5px;height:197.10000000000002px;background:linear-gradient(#7428a6,#8421a2)"></div>
<div style="position:absolute;left:8.9px;top:678.6px;width:23.2px;height:23.2px;border-radius:50%;background:#8421a2"></div>
<svg style="position:absolute;left:42.3px;top:685.8000000000001px" width="14" height="10" viewBox="0 0 14 10"><path d="M1.3 1.6L6.9 7.6L12.5 1.6" fill="none" stroke="#a250bc" stroke-width="1.5" stroke-linecap="round" stroke-linejoin="round"/></svg>
<div style="position:absolute;left:19.8px;top:709px;width:1.5px;height:160.5px;background:linear-gradient(#8421a2,#8f1ea0)"></div>
<div style="position:absolute;left:17.4px;top:876.2px;width:6.2px;height:0.8px;border-radius:3px 3px 0 0;background:#dcb0ea"></div>
<div style="position:absolute;left:66px;top:286px;width:630px;height:33px;box-sizing:border-box;background:#fff;border:1px solid #c6cae6;border-radius:3px;"></div>
<div style="position:absolute;left:178px;top:287px;width:1px;height:31px;background:#c6cae6"></div>
<div style="position:absolute;left:623px;top:287px;width:1px;height:31px;background:#c6cae6"></div>
<div style="position:absolute;left:347px;top:286.4px;width:121px;height:32.3px;background:#0869c9"></div>
<div style="position:absolute;left:328px;top:333px;width:78px;height:25px;box-sizing:border-box;background:#fff;border:1px solid #c6cae6;border-radius:3px;"></div>
<svg style="position:absolute;left:390.75px;top:344.15px" width="8.5" height="4.5" viewBox="0 0 8.5 4.5"><path d="M0 0H8.5L4.25 4.5Z" fill="#5c6873"/></svg>
<svg style="position:absolute;left:67px;top:372.5px" width="11" height="14" viewBox="0 0 11 14"><path d="M3.6 9A4.16 4.16 0 1 1 7.4 9" fill="none" stroke="#6526aa" stroke-width="1" stroke-linecap="round"/><path d="M5.5 4.6V9.2M3.1 11.05H7.9M4.1 12.85H6.9" fill="none" stroke="#6526aa" stroke-width="0.95" stroke-linecap="round"/></svg>
<svg style="position:absolute;left:350.6px;top:396.2px" width="11.6" height="11.6" viewBox="0 0 12 12"><circle cx="6" cy="6" r="6" fill="#0869c9"/><path d="M4.1 4.7c0-1 .8-1.8 1.95-1.8 1.1 0 1.9.7 1.9 1.65 0 .8-.45 1.2-1 1.6-.45.3-.6.5-.6 1" fill="none" stroke="#fff" stroke-width="1.25"/><circle cx="6.3" cy="9.1" r=".8" fill="#fff"/></svg>
<div style="position:absolute;left:66px;top:489px;width:339px;height:25px;box-sizing:border-box;background:#fff;border:1px solid #c6cae6;border-radius:3px;"></div>
<div style="position:absolute;left:66px;top:489px;width:26px;height:25px;background:#0869c9;border-radius:4px 0 0 4px"></div>
<div style="position:absolute;left:180px;top:490px;width:1px;height:23px;background:#c6cae6"></div>
<div style="position:absolute;left:295px;top:490px;width:1px;height:23px;background:#c6cae6"></div>
<svg style="position:absolute;left:166.95px;top:499.75px" width="8.5" height="4.5" viewBox="0 0 8.5 4.5"><path d="M0 0H8.5L4.25 4.5Z" fill="#5c6873"/></svg>
<svg style="position:absolute;left:281.65px;top:500.15000000000003px" width="8.5" height="4.5" viewBox="0 0 8.5 4.5"><path d="M0 0H8.5L4.25 4.5Z" fill="#0b6bcb"/></svg>
<svg style="position:absolute;left:388.85px;top:499.75px" width="8.5" height="4.5" viewBox="0 0 8.5 4.5"><path d="M0 0H8.5L4.25 4.5Z" fill="#5c6873"/></svg>
<div style="position:absolute;left:405px;top:500.40000000000003px;width:7px;height:2.4px;background:#dcdff0"></div>
<div style="position:absolute;left:611px;top:500.40000000000003px;width:8px;height:2.4px;background:#dcdff0"></div>
<div style="position:absolute;left:412px;top:489px;width:199px;height:25px;box-sizing:border-box;background:#fff;border:1px solid #c6cae6;border-radius:3px;"></div>
<div style="position:absolute;left:413px;top:490px;width:117.5px;height:23px;background:#e5e7f2;border-right:1px solid #d4d8ec;border-radius:2px 0 0 2px;box-sizing:border-box"></div>
<svg style="position:absolute;left:595.95px;top:499.75px" width="8.5" height="4.5" viewBox="0 0 8.5 4.5"><path d="M0 0H8.5L4.25 4.5Z" fill="#5c6873"/></svg>
<div style="position:absolute;left:619px;top:489px;width:203px;height:25px;box-sizing:border-box;background:#fff;border:1px solid #c6cae6;border-radius:3px;"></div>
<div style="position:absolute;left:620px;top:490px;width:121.5px;height:23px;background:#e5e7f2;border-right:1px solid #d4d8ec;border-radius:2px 0 0 2px;box-sizing:border-box"></div>
<svg style="position:absolute;left:806.05px;top:499.75px" width="8.5" height="4.5" viewBox="0 0 8.5 4.5"><path d="M0 0H8.5L4.25 4.5Z" fill="#5c6873"/></svg>
<svg style="position:absolute;left:1472.4px;top:496.4px" width="14.4" height="10.2" viewBox="0 0 16 11"><path d="M4.3 2.2L1 5.5l3.3 3.3M11.7 2.2L15 5.5l-3.3 3.3M9.3 1L6.7 10" fill="none" stroke="#5c6873" stroke-width="1.2" stroke-linecap="round" stroke-linejoin="round"/></svg>
<div style="position:absolute;left:188px;top:514px;width:7px;height:19.6px;border-left:2px solid #dcdff0;border-bottom:2px solid #dcdff0;box-sizing:border-box"></div>
<div style="position:absolute;left:195px;top:521px;width:773px;height:25px;box-sizing:border-box;background:#fff;border:1px solid #c6cae6;border-radius:3px;"></div>
<div style="position:absolute;left:196px;top:522px;width:54px;height:23px;background:#e5e7f2;border-right:1px solid #d4d8ec;border-radius:2px 0 0 2px;box-sizing:border-box"></div>
<svg style="position:absolute;left:257px;top:526.5px" width="14" height="14" viewBox="0 0 14 14"><circle cx="5.9" cy="5.9" r="4.6" fill="none" stroke="#7a848d" stroke-width="1.3"/><path d="M9.3 9.3l3.6 3.6" stroke="#7a848d" stroke-width="1.3" stroke-linecap="round"/></svg>
<div style="position:absolute;left:279px;top:522px;width:390.7px;height:23px;background:#e9f5fd"></div>
<div style="position:absolute;left:700.2px;top:522px;width:225.8px;height:23px;background:#e9f5fd"></div>
<svg style="position:absolute;left:950.6px;top:527.4px" width="12" height="12" viewBox="0 0 12 12"><path d="M1 1l10 10M11 1L1 11" stroke="#56606a" stroke-width="1.25" stroke-linecap="round"/></svg>
<div style="position:absolute;left:968px;top:532.3px;width:7px;height:2.4px;background:#dcdff0"></div>
<div style="position:absolute;left:1308px;top:532.3px;width:7px;height:2.4px;background:#dcdff0"></div>
<div style="position:absolute;left:975px;top:521px;width:333px;height:25px;box-sizing:border-box;background:#fff;border:1px solid #c6cae6;border-radius:3px;"></div>
<div style="position:absolute;left:976px;top:522px;width:61px;height:23px;background:#e5e7f2;border-right:1px solid #d4d8ec;border-radius:2px 0 0 2px;box-sizing:border-box"></div>
<div style="position:absolute;left:1041.5px;top:524px;width:93.5px;height:17.6px;background:#eef0f7;border-radius:2px"></div>
<svg style="position:absolute;left:1121.5px;top:528.3px" width="9" height="9" viewBox="0 0 9 9"><path d="M1 1l7 7M8 1L1 8" stroke="#5c6873" stroke-width="1" stroke-linecap="round"/></svg>
<div style="position:absolute;left:1315px;top:521px;width:110px;height:25px;box-sizing:border-box;background:#fff;border:1px solid #c6cae6;border-radius:3px;"></div>
<div style="position:absolute;left:1316px;top:522px;width:43.5px;height:23px;background:#e5e7f2;border-right:1px solid #d4d8ec;border-radius:2px 0 0 2px;box-sizing:border-box"></div>
<div style="position:absolute;left:1399.5px;top:522px;width:1px;height:23px;background:#c6cae6"></div>
<div style="position:absolute;left:1410.4px;top:526.4px;width:3.4px;height:3.4px;border-radius:50%;background:#4a545e"></div>
<div style="position:absolute;left:1410.4px;top:531.4px;width:3.4px;height:3.4px;border-radius:50%;background:#4a545e"></div>
<div style="position:absolute;left:1410.4px;top:536.4px;width:3.4px;height:3.4px;border-radius:50%;background:#4a545e"></div>
<div style="position:absolute;left:66px;top:560px;width:98px;height:25px;box-sizing:border-box;background:#fff;border:1px solid #c6cae6;border-radius:3px;"></div>
<svg style="position:absolute;left:77.1px;top:566.6px" width="12" height="12" viewBox="0 0 12 12"><path d="M6 .3v11.4M.3 6h11.4" stroke="#4a545d" stroke-width="2.3"/></svg>
<div style="position:absolute;left:171px;top:560px;width:110px;height:25px;box-sizing:border-box;background:#fff;border:1px solid #c6cae6;border-radius:3px;"></div>
<svg style="position:absolute;left:182.1px;top:566.6px" width="12" height="12" viewBox="0 0 12 12"><path d="M6 .3v11.4M.3 6h11.4" stroke="#4a545d" stroke-width="2.3"/></svg>
<svg style="position:absolute;left:67px;top:607.1px" width="11" height="14" viewBox="0 0 11 14"><path d="M3.6 9A4.16 4.16 0 1 1 7.4 9" fill="none" stroke="#6f25a8" stroke-width="1" stroke-linecap="round"/><path d="M5.5 4.6V9.2M3.1 11.05H7.9M4.1 12.85H6.9" fill="none" stroke="#6f25a8" stroke-width="0.95" stroke-linecap="round"/></svg>
<div style="position:absolute;left:200px;top:723px;width:71px;height:25px;box-sizing:border-box;background:#fff;border:1px solid #c6cae6;border-radius:3px;"></div>
<svg style="position:absolute;left:254.64999999999998px;top:734.55px" width="8.5" height="4.5" viewBox="0 0 8.5 4.5"><path d="M0 0H8.5L4.25 4.5Z" fill="#5c6873"/></svg>
<div style="position:absolute;left:66.4px;top:780.9px;width:4.6px;height:17.4px;border-radius:2.3px;background:#eb364b"></div>
<div style="position:absolute;left:335px;top:777px;width:72px;height:25px;box-sizing:border-box;background:#fff;border:1px solid #c6cae6;border-radius:3px;"></div>
<div style="position:absolute;left:66.4px;top:820.0px;width:4.6px;height:17.4px;border-radius:2.3px;background:#ffa30f"></div>
<div style="position:absolute;left:335px;top:816px;width:72px;height:25px;box-sizing:border-box;background:#fff;border:1px solid #c6cae6;border-radius:3px;"></div>
<span class="t" style="left:69.00px;top:204.60px;font-size:10.8px;letter-spacing:-0.070px;">bedrock</span>
<span class="t" style="left:136.00px;top:204.60px;font-size:10.8px;letter-spacing:0.052px;">cloudformation</span>
<span class="t" style="left:237.00px;top:204.60px;font-size:10.8px;letter-spacing:-0.115px;">cloudshell</span>
<span class="t" style="left:313.00px;top:204.60px;font-size:10.8px;letter-spacing:0.031px;">cloudtrail</span>
<span class="t" style="left:385.00px;top:204.60px;font-size:10.8px;letter-spacing:-0.059px;">cloudwatch</span>
<span class="t" style="left:467.50px;top:204.60px;font-size:10.8px;letter-spacing:0.037px;">config</span>
<span class="t" style="left:526.00px;top:204.60px;font-size:10.8px;letter-spacing:-0.165px;">costexplorer</span>
<span class="t" style="left:612.50px;top:204.60px;font-size:10.8px;letter-spacing:-0.132px;">dynamodb</span>
<span class="t" style="left:804.00px;top:204.60px;font-size:10.8px;letter-spacing:-0.154px;">bedrock</span>
<span class="t" style="left:871.00px;top:204.60px;font-size:10.8px;letter-spacing:-0.025px;">cloudformation</span>
<span class="t" style="left:972.00px;top:204.60px;font-size:10.8px;transform:scaleX(0.9577);">cloudshell</span>
<span class="t" style="left:1047.50px;top:204.60px;font-size:10.8px;letter-spacing:-0.024px;">cloudtrail</span>
<span class="t" style="left:1120.00px;top:204.60px;font-size:10.8px;letter-spacing:-0.170px;">cloudwatch</span>
<span class="t" style="left:1202.00px;top:204.60px;font-size:10.8px;letter-spacing:-0.062px;">config</span>
<span class="t" style="left:1260.00px;top:204.60px;font-size:10.8px;letter-spacing:-0.165px;">costexplorer</span>
<span class="t" style="left:1347.00px;top:204.60px;font-size:10.8px;letter-spacing:-0.132px;">dynamodb</span>
<span class="t" style="left:696.69px;top:205.50px;font-size:9.8px;">+20</span>
<span class="t" style="left:1431.19px;top:205.50px;font-size:9.8px;">+20</span>
<span class="t" style="left:50.60px;top:43.50px;font-size:9.1px;transform:scaleX(0.9679);">$6</span>
<span class="t" style="left:50.60px;top:86.10px;font-size:9.1px;transform:scaleX(0.9679);">$4</span>
<span class="t" style="left:50.60px;top:128.30px;font-size:9.1px;transform:scaleX(0.9679);">$2</span>
<span class="t" style="left:50.60px;top:170.40px;font-size:9.1px;transform:scaleX(0.9679);">$0</span>
<span class="t" style="left:779.80px;top:43.70px;font-size:9.1px;letter-spacing:0.106px;">$60</span>
<span class="t" style="left:779.80px;top:86.00px;font-size:9.1px;letter-spacing:0.106px;">$40</span>
<span class="t" style="left:779.80px;top:128.20px;font-size:9.1px;letter-spacing:0.106px;">$20</span>
<span class="t" style="left:785.40px;top:170.40px;font-size:9.1px;transform:scaleX(0.9679);">$0</span>
<span class="t" style="left:62.10px;top:178.80px;font-size:9.3px;transform:scaleX(0.9565);">Oct 10</span>
<span class="t" style="left:796.60px;top:178.80px;font-size:9.3px;transform:scaleX(0.9565);">Oct 10</span>
<span class="t" style="left:127.29px;top:178.80px;font-size:9.3px;transform:scaleX(0.9565);">Oct 13</span>
<span class="t" style="left:861.91px;top:178.80px;font-size:9.3px;transform:scaleX(0.9565);">Oct 13</span>
<span class="t" style="left:192.48px;top:178.80px;font-size:9.3px;transform:scaleX(0.9565);">Oct 16</span>
<span class="t" style="left:927.22px;top:178.80px;font-size:9.3px;transform:scaleX(0.9565);">Oct 16</span>
<span class="t" style="left:257.67px;top:178.80px;font-size:9.3px;transform:scaleX(0.9565);">Oct 19</span>
<span class="t" style="left:992.53px;top:178.80px;font-size:9.3px;transform:scaleX(0.9565);">Oct 19</span>
<span class="t" style="left:322.86px;top:178.80px;font-size:9.3px;transform:scaleX(0.9565);">Oct 22</span>
<span class="t" style="left:1057.84px;top:178.80px;font-size:9.3px;transform:scaleX(0.9565);">Oct 22</span>
<span class="t" style="left:388.05px;top:178.80px;font-size:9.3px;transform:scaleX(0.9565);">Oct 25</span>
<span class="t" style="left:1123.15px;top:178.80px;font-size:9.3px;transform:scaleX(0.9565);">Oct 25</span>
<span class="t" style="left:453.24px;top:178.80px;font-size:9.3px;transform:scaleX(0.9565);">Oct 28</span>
<span class="t" style="left:1188.46px;top:178.80px;font-size:9.3px;transform:scaleX(0.9565);">Oct 28</span>
<span class="t" style="left:518.43px;top:178.80px;font-size:9.3px;transform:scaleX(0.9565);">Oct 31</span>
<span class="t" style="left:1253.77px;top:178.80px;font-size:9.3px;transform:scaleX(0.9565);">Oct 31</span>
<span class="t" style="left:585.32px;top:178.80px;font-size:9.3px;transform:scaleX(0.9384);">Nov 3</span>
<span class="t" style="left:1320.78px;top:178.80px;font-size:9.3px;transform:scaleX(0.9384);">Nov 3</span>
<span class="t" style="left:650.51px;top:178.80px;font-size:9.3px;transform:scaleX(0.9384);">Nov 6</span>
<span class="t" style="left:1386.09px;top:178.80px;font-size:9.3px;transform:scaleX(0.9384);">Nov 6</span>
<span class="t" style="left:715.60px;top:178.80px;font-size:9.3px;transform:scaleX(0.9384);">Nov 9</span>
<span class="t" style="left:1450.00px;top:178.80px;font-size:9.3px;transform:scaleX(0.9384);">Nov 9</span>
<span class="t" style="left:803.40px;top:54.50px;font-size:11.2px;font-weight:700;color:#f55f78;transform:scaleX(0.9381);">Cost &gt; $50</span>
<span class="t" style="left:803.00px;top:70.40px;font-size:9.2px;color:#eea408;letter-spacing:-0.160px;">$45 &lt; Cost &lt;= $50</span>
<span class="t" style="left:27.00px;top:17.60px;font-size:13px;font-weight:700;letter-spacing:0.173px;">Daily Cost View</span>
<span class="t" style="left:762.00px;top:17.60px;font-size:13px;font-weight:700;letter-spacing:0.120px;">Cost Threshold View</span>
<span class="t" style="left:16.97px;top:243.90px;font-size:11.6px;font-weight:700;color:#fff;">1</span>
<span class="t" style="left:66.50px;top:244.80px;font-size:17px;letter-spacing:-0.072px;">Select a cost monitor type</span>
<span class="t" style="left:16.97px;top:446.10px;font-size:11.6px;font-weight:700;color:#fff;">2</span>
<span class="t" style="left:66.50px;top:447.00px;font-size:17px;letter-spacing:-0.135px;">Specify which cost to track</span>
<span class="t" style="left:16.97px;top:680.60px;font-size:11.6px;font-weight:700;color:#fff;">3</span>
<span class="t" style="left:66.50px;top:681.40px;font-size:17px;letter-spacing:-0.031px;">Set alert conditions</span>
<span class="t" style="left:80.00px;top:292.80px;font-size:14px;transform:scaleX(0.9615);">Cost Changes</span>
<span class="t" style="left:191.80px;top:292.80px;font-size:14px;letter-spacing:-0.083px;">Cost Anomalies</span>
<span class="t" style="left:292.60px;top:293.30px;font-size:10.6px;font-weight:700;color:#9a44e0;transform:scaleX(0.8514);">PREVIEW</span>
<span class="t" style="left:360.80px;top:292.80px;font-size:14px;color:#fff;letter-spacing:-0.099px;">Cost Threshold</span>
<span class="t" style="left:480.80px;top:292.80px;font-size:14px;transform:scaleX(0.9525);">Cost Forecast</span>
<span class="t" style="left:568.80px;top:293.30px;font-size:10.6px;font-weight:700;color:#9a44e0;transform:scaleX(0.8535);">PREVIEW</span>
<span class="t" style="left:637.50px;top:292.80px;font-size:14px;letter-spacing:0.025px;">Budget</span>
<span class="t" style="left:66.80px;top:335.80px;font-size:12.4px;letter-spacing:-0.075px;">Once a day, compare the total cost for the past</span>
<span class="t" style="left:335.80px;top:335.80px;font-size:12.4px;transform:scaleX(0.9492);">30 days</span>
<span class="t" style="left:417.50px;top:335.80px;font-size:12.4px;letter-spacing:-0.038px;">against my cost threshold.</span>
<span class="t" style="left:82.00px;top:370.20px;font-size:11.6px;color:#6526aa;transform:scaleX(0.9377);">Example</span>
<span class="t" style="left:66.80px;top:391.80px;font-size:11.3px;color:#5c6873;letter-spacing:0.063px;">Alert me if the total cost for</span>
<span class="t" style="left:207.60px;top:391.80px;font-size:11.6px;font-family:'Liberation Mono',monospace;transform:scaleX(0.8973);">OCT 10 - NOV 9</span>
<span class="t" style="left:298.00px;top:391.80px;font-size:11.3px;color:#5c6873;transform:scaleX(0.8566);">is</span>
<span class="t" style="left:308.80px;top:391.80px;font-size:11.6px;font-family:'Liberation Mono',monospace;transform:scaleX(0.8958);">&gt; $500</span>
<span class="t" style="left:76.08px;top:492.20px;font-size:12.3px;color:#fff;">a</span>
<span class="t" style="left:100.60px;top:491.60px;font-size:12.3px;transform:scaleX(0.9516);">Cloud Cost</span>
<span class="t" style="left:188.00px;top:492.40px;font-size:11.5px;color:#0b6bcb;transform:scaleX(0.9038);">AWS</span>
<span class="t" style="left:303.90px;top:491.60px;font-size:12.3px;letter-spacing:0.072px;">Net Amortized</span>
<span class="t" style="left:418.20px;top:491.60px;font-size:12.3px;color:#5c6873;letter-spacing:-0.020px;">Container Allocated</span>
<span class="t" style="left:538.70px;top:491.60px;font-size:12.3px;transform:scaleX(0.9570);">Enabled</span>
<span class="t" style="left:625.30px;top:491.60px;font-size:12.3px;color:#5c6873;transform:scaleX(0.9627);">Usage Charges Only</span>
<span class="t" style="left:748.80px;top:491.60px;font-size:12.3px;transform:scaleX(0.9570);">Enabled</span>
<span class="t" style="left:201.40px;top:523.70px;font-size:12.3px;color:#5c6873;letter-spacing:-0.142px;">Filter by</span>
<span class="t" style="left:284.00px;top:523.70px;font-size:12px;transform:scaleX(0.9573);">aws_cost_type</span>
<span class="t" style="left:364.60px;top:524.00px;font-size:10.5px;color:#c2189b;letter-spacing:-0.100px;">IN</span>
<span class="t" style="left:378.60px;top:523.70px;font-size:12px;color:#1d3f80;letter-spacing:-0.075px;"><span style="color:#c2189b">(</span><span style="color:#1d3f80">Usage</span><span style="color:#c2189b">,</span><span style="color:#1d3f80">DiscountedUsage</span><span style="color:#c2189b">,</span><span style="color:#1d3f80">SavingsPlanCoveredUsage</span><span style="color:#c2189b">)</span></span>
<span class="t" style="left:675.40px;top:524.00px;font-size:10.5px;color:#c2189b;transform:scaleX(0.9562);">AND</span>
<span class="t" style="left:705.00px;top:523.70px;font-size:12px;letter-spacing:0.095px;">aws_product</span>
<span class="t" style="left:777.30px;top:524.00px;font-size:10.5px;color:#c2189b;letter-spacing:-0.041px;">NOT IN</span>
<span class="t" style="left:816.00px;top:523.70px;font-size:12px;color:#1d3f80;transform:scaleX(1.0445);"><span style="color:#c2189b">(</span><span style="color:#1d3f80">supportenterprise</span><span style="color:#c2189b">)</span></span>
<span class="t" style="left:981.50px;top:523.70px;font-size:12.3px;color:#5c6873;letter-spacing:-0.156px;">Group by</span>
<span class="t" style="left:1045.60px;top:522.70px;font-size:12px;color:#5c6873;letter-spacing:0.035px;">aws_product</span>
<span class="t" style="left:1322.00px;top:523.70px;font-size:12.3px;color:#5c6873;letter-spacing:0.184px;">rollup</span>
<span class="t" style="left:1367.60px;top:523.70px;font-size:12.3px;letter-spacing:-0.099px;">daily</span>
<span class="t" style="left:96.80px;top:562.60px;font-size:12.3px;letter-spacing:-0.162px;">Add Query</span>
<span class="t" style="left:201.80px;top:562.60px;font-size:12.3px;letter-spacing:-0.171px;">Add Formula</span>
<span class="t" style="left:82.00px;top:604.30px;font-size:11.6px;color:#6f25a8;transform:scaleX(0.9377);">Example</span>
<span class="t" style="left:66.80px;top:626.10px;font-size:11.3px;color:#5c6873;letter-spacing:-0.075px;">To set an alert for each</span>
<span class="t" style="left:184.30px;top:626.10px;font-size:11.6px;font-family:'Liberation Mono',monospace;transform:scaleX(0.8512);-webkit-text-stroke:0.12px #1c2b34;">team</span>
<span class="t" style="left:208.50px;top:626.10px;font-size:11.3px;color:#5c6873;letter-spacing:-0.085px;">, add</span>
<span class="t" style="left:237.50px;top:626.10px;font-size:11.6px;font-family:'Liberation Mono',monospace;transform:scaleX(0.8620);-webkit-text-stroke:0.12px #1c2b34;">team</span>
<span class="t" style="left:265.80px;top:626.10px;font-size:11.3px;color:#5c6873;transform:scaleX(0.9446);">to the</span>
<span class="t" style="left:297.50px;top:626.10px;font-size:11.6px;font-family:'Liberation Mono',monospace;transform:scaleX(0.8748);-webkit-text-stroke:0.12px #1c2b34;">group by</span>
<span class="t" style="left:350.80px;top:626.10px;font-size:11.3px;color:#5c6873;letter-spacing:-0.032px;">field in queries above.</span>
<span class="t" style="left:66.50px;top:726.20px;font-size:12.4px;letter-spacing:-0.047px;">Trigger when the cost is</span>
<span class="t" style="left:208.80px;top:726.20px;font-size:12.4px;transform:scaleX(0.9625);">above</span>
<span class="t" style="left:274.50px;top:726.20px;font-size:12.4px;letter-spacing:-0.027px;">the threshold(s) for any</span>
<span class="t" style="left:405.50px;top:726.20px;font-size:12.2px;font-weight:700;transform:scaleX(0.9244);">aws_product</span>
<span class="t" style="left:475.67px;top:726.20px;font-size:12.4px;">.</span>
<span class="t" style="left:78.30px;top:779.50px;font-size:12.4px;font-weight:700;transform:scaleX(0.9457);">Alert</span>
<span class="t" style="left:109.50px;top:779.50px;font-size:12.4px;letter-spacing:-0.061px;">threshold</span>
<span class="t" style="left:307.52px;top:779.50px;font-size:11.6px;font-family:'Liberation Mono',monospace;-webkit-text-stroke:0.2px #1c2b34;">&gt;</span>
<span class="t" style="left:321.72px;top:779.50px;font-size:11.6px;font-family:'Liberation Mono',monospace;-webkit-text-stroke:0.2px #1c2b34;">$</span>
<span class="t" style="left:343.50px;top:779.50px;font-size:12.4px;transform:scaleX(0.9422);">50</span>
<span class="t" style="left:78.30px;top:818.60px;font-size:12.4px;font-weight:700;transform:scaleX(0.9509);">Warning</span>
<span class="t" style="left:129.30px;top:818.60px;font-size:12.4px;letter-spacing:0.064px;">threshold</span>
<span class="t" style="left:307.52px;top:818.60px;font-size:11.6px;font-family:'Liberation Mono',monospace;-webkit-text-stroke:0.2px #1c2b34;">&gt;</span>
<span class="t" style="left:321.72px;top:818.60px;font-size:11.6px;font-family:'Liberation Mono',monospace;-webkit-text-stroke:0.2px #1c2b34;">$</span>
<span class="t" style="left:343.50px;top:818.60px;font-size:12.4px;transform:scaleX(0.9422);">45</span>
<span class="t" style="left:420.50px;top:818.60px;font-size:12.4px;color:#7b858f;letter-spacing:0.010px;">(Optional)</span>
</body></html>
